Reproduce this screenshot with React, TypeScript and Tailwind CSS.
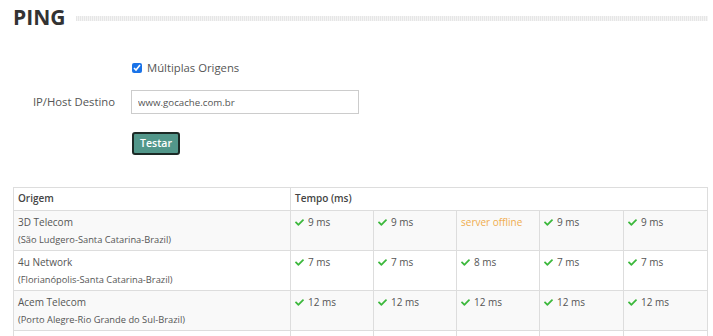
import React from "react";

const Check = () => (
  <svg viewBox="0 0 512 512" className="w-[9px] h-[9px] inline-block mr-[4px] -mt-[2px] fill-[#3cb83c]">
    <path d="M173.9 439.4l-166.4-166.4c-10-10-10-26.2 0-36.2l36.2-36.2c10-10 26.2-10 36.2 0L192 312.7 432.1 72.6c10-10 26.2-10 36.2 0l36.2 36.2c10 10 10 26.2 0 36.2l-294.4 294.4c-10 10-26.2 10-36.2 0z" />
  </svg>
);

type Row = { name: string; loc: string; vals: (string | null)[] };

const rows: Row[] = [
  { name: "3D Telecom", loc: "(São Ludgero-Santa Catarina-Brazil)", vals: ["9 ms", "9 ms", null, "9 ms", "9 ms"] },
  { name: "4u Network", loc: "(Florianópolis-Santa Catarina-Brazil)", vals: ["7 ms", "7 ms", "8 ms", "7 ms", "7 ms"] },
  { name: "Acem Telecom", loc: "(Porto Alegre-Rio Grande do Sul-Brazil)", vals: ["12 ms", "12 ms", "12 ms", "12 ms", "12 ms"] },
  { name: "", loc: "", vals: ["", "", "", "", ""] },
];

export default function App() {
  return (
    <div className="w-[713px] h-[336px] overflow-hidden bg-white text-[#555] font-['Open_Sans',sans-serif]">
      <div className="flex items-center pl-[13px] pr-[5px] pt-[3px]">
        <h1 className="text-[21px] font-bold text-[#333] leading-[28px]">PING</h1>
        <div className="flex-1 ml-[11px] mt-[2px] h-[5px] bg-[repeating-linear-gradient(90deg,#e6e6e6_0px,#e6e6e6_1px,#f4f4f4_1px,#f4f4f4_2px)]" />
      </div>

      <div className="pl-[132px] mt-[29px] flex items-center h-[16px]">
        <input type="checkbox" defaultChecked className="w-[10px] h-[10px] m-0 accent-[#1a73e8]" />
        <span className="ml-[5px] text-[11.3px] leading-[16px] text-[#555]">Múltiplas Origens</span>
      </div>

      <div className="flex items-center mt-[14px]">
        <label className="w-[115px] text-right text-[11.3px] text-[#555]">IP/Host Destino</label>
        <input
          type="text"
          defaultValue="www.gocache.com.br"
          className="ml-[16px] w-[228px] h-[24px] border border-[#ccc] px-[6px] text-[9.7px] text-[#555] outline-none"
        />
      </div>

      <div className="pl-[132px] mt-[15px]">
        <button className="w-[48px] h-[23px] rounded-[3px] bg-[#52978a] border-2 border-[#1c2a26] text-white text-[10.5px] font-semibold leading-none">
          Testar
        </button>
      </div>

      <div className="px-[13px] mt-[32px]">
        <table className="w-[694px] border-collapse text-[10px] table-fixed">
          <colgroup>
            <col className="w-[277px]" />
            <col className="w-[83px]" />
            <col className="w-[83px]" />
            <col className="w-[83px]" />
            <col className="w-[84px]" />
            <col className="w-[84px]" />
          </colgroup>
          <thead>
            <tr className="h-[23px]">
              <th className="border border-[#ddd] text-left font-semibold px-[4px] text-[#444]">Origem</th>
              <th colSpan={5} className="border border-[#ddd] text-left font-semibold px-[4px] text-[#444]">Tempo (ms)</th>
            </tr>
          </thead>
          <tbody>
            {rows.map((r, i) => (
              <tr key={i} className={i % 2 === 0 ? "bg-[#f9f9f9] h-[40px]" : "bg-white h-[40px]"}>
                <td className="border border-[#ddd] px-[4px] pt-[3px] align-top">
                  <div className="leading-[16px] text-[#555]">{r.name}</div>
                  <div className="leading-[16px] text-[9.3px] text-[#555] mt-[2px]">{r.loc}</div>
                </td>
                {r.vals.map((v, j) => (
                  <td key={j} className="border border-[#ddd] px-[4px] pt-[3px] align-top">
                    {v === null ? (
                      <span className="text-[#f0ad4e] leading-[16px]">server offline</span>
                    ) : v ? (
                      <span className="leading-[16px] whitespace-nowrap">
                        <Check />
                        {v}
                      </span>
                    ) : null}
                  </td>
                ))}
              </tr>
            ))}
          </tbody>
        </table>
      </div>
    </div>
  );
}
